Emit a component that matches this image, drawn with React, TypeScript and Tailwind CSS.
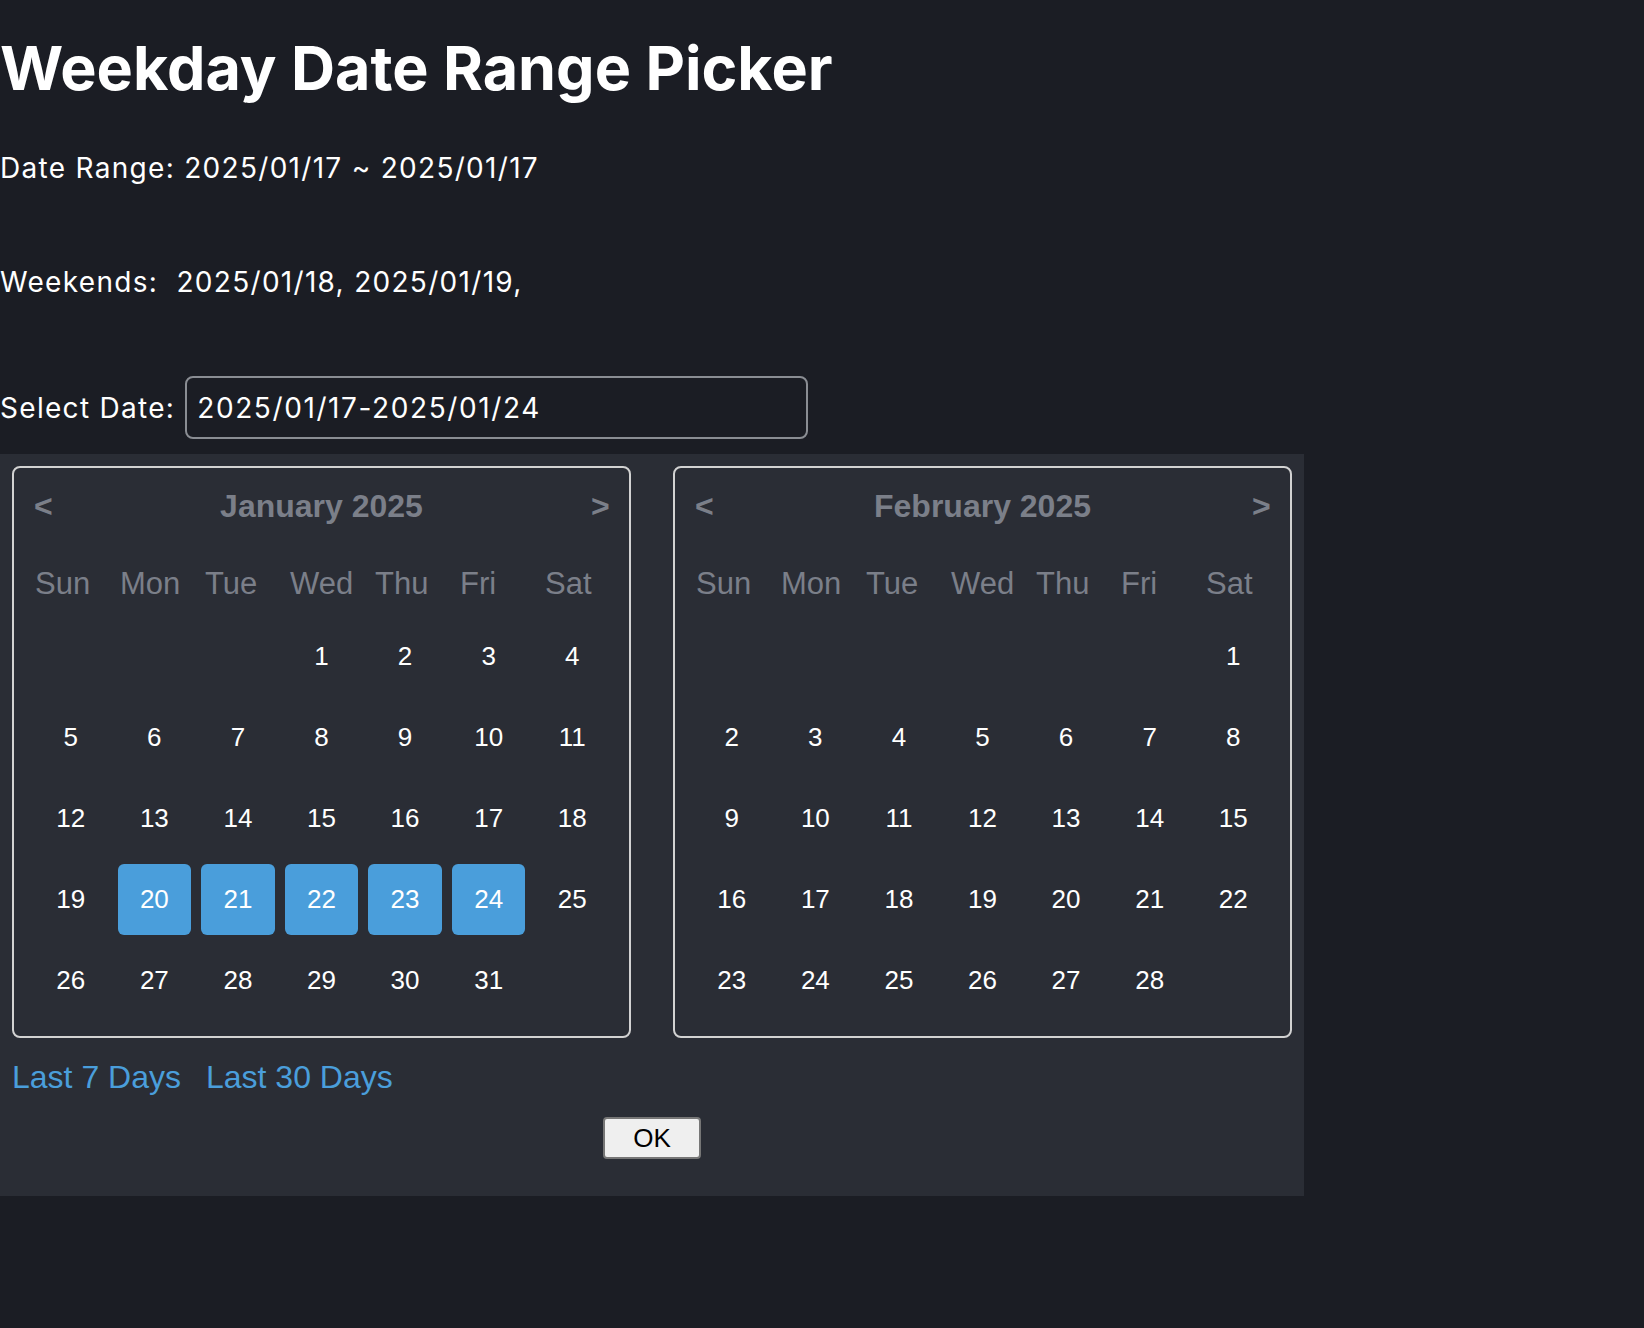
import React from 'react';

type Month = { name: string; offset: number; days: number };

const months: Month[] = [
  { name: 'January 2025', offset: 3, days: 31 },
  { name: 'February 2025', offset: 6, days: 28 },
];

const weekdays = ['Sun', 'Mon', 'Tue', 'Wed', 'Thu', 'Fri', 'Sat'];

// weekdays picked in January
const selected = [20, 21, 22, 23, 24];

function Calendar({ month, highlight }: { month: Month; highlight: number[] }) {
  const cells: (number | null)[] = [];
  for (let i = 0; i < month.offset; i++) cells.push(null);
  for (let d = 1; d <= month.days; d++) cells.push(d);
  while (cells.length < 35) cells.push(null);

  return (
    <div className="flex-1 rounded-lg border-2 border-[#d2d2d2] p-5">
      <div className="flex h-9 items-center justify-between text-[32px] font-bold text-[#7b7f89]">
        <span className="w-[18px] leading-none">&lt;</span>
        <span className="leading-none">{month.name}</span>
        <span className="w-[18px] leading-none">&gt;</span>
      </div>

      <div className="mt-[41px] grid h-9 grid-cols-7 items-center gap-x-5 text-[31px] leading-none text-[#7b7f89]">
        {weekdays.map((w) => (
          <span key={w} className="pl-px">
            {w}
          </span>
        ))}
      </div>

      <div className="mt-5 grid grid-cols-7 gap-[10px]">
        {cells.map((d, i) => {
          const on = d !== null && highlight.includes(d);
          return (
            <div
              key={i}
              className={`flex h-[71px] items-center justify-center rounded-md text-[26px] text-white ${
                on ? 'bg-[#4a9edb]' : ''
              }`}
            >
              {d}
            </div>
          );
        })}
      </div>
    </div>
  );
}

export default function App() {
  return (
    <div className="min-h-screen bg-[#1b1d24] font-['Inter',sans-serif] text-white">
      <h1 className="pt-[31px] text-[61px] font-bold leading-[75px]">Weekday Date Range Picker</h1>

      <p className="mt-[45px] text-[28px] leading-[34px] tracking-[1.3px]">
        Date Range: 2025/01/17 ~ 2025/01/17
      </p>

      <p className="mt-[80px] text-[28px] leading-[34px] tracking-[1.3px]">
        Weekends:&nbsp; 2025/01/18, 2025/01/19,
      </p>

      <div className="mt-[77px] flex items-center gap-[10px] text-[28px] tracking-[1.3px]">
        <label>Select Date:</label>
        <input
          readOnly
          value="2025/01/17-2025/01/24"
          className="h-[63px] w-[623px] rounded-lg border-2 border-[#8a8d93] bg-[#1b1d24] px-[10px] tracking-[1.6px] text-white outline-none"
        />
      </div>

      <div className="mt-[15px] w-[1304px] bg-[#2a2d35] px-3 pb-[37px] pt-3 font-['Liberation_Sans',Arial,sans-serif]">
        <div className="flex gap-[42px]">
          <Calendar month={months[0]} highlight={selected} />
          <Calendar month={months[1]} highlight={[]} />
        </div>

        <div className="mt-[22px] flex gap-[25px] text-[32px] leading-[35px] text-[#4a9edb]">
          <a className="cursor-pointer">Last 7 Days</a>
          <a className="cursor-pointer">Last 30 Days</a>
        </div>

        <div className="mt-[22px] flex justify-center">
          <button className="h-[42px] w-[98px] rounded border-2 border-[#767676] bg-[#efefef] text-[26px] text-black">
            OK
          </button>
        </div>
      </div>
    </div>
  );
}
